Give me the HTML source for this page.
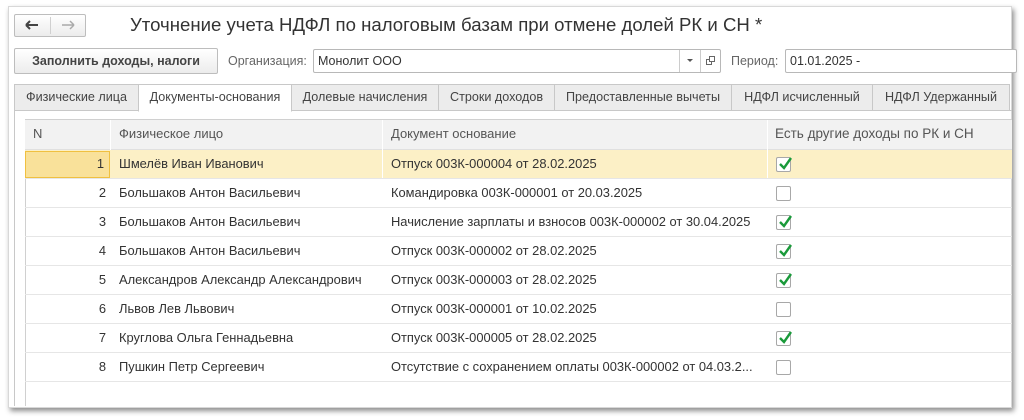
<!DOCTYPE html>
<html><head><meta charset="utf-8"><style>
*{box-sizing:border-box;margin:0;padding:0}
body{width:1024px;height:420px;background:#fff;font-family:"Liberation Sans","Noto Sans CJK SC",sans-serif;font-size:12px;color:#333;position:relative;overflow:hidden}
.win{position:absolute;left:8px;top:6px;width:1004px;height:402px;background:#fff;box-shadow:2px 3px 5px rgba(0,0,0,.45);border:1px solid #d8d8d8}
.abs{position:absolute}
.btn{position:absolute;border:1px solid #bdbdbd;border-radius:2px;background:linear-gradient(#fff,#ececec)}
.inp{position:absolute;border:1px solid #b8b8b8;background:#fff;border-radius:2px;height:24px;line-height:22px;padding-left:4px;color:#333;font-size:12.5px}
.lbl{position:absolute;color:#666;line-height:24px;font-size:12.5px}
.tab{position:absolute;top:84px;height:27px;border:1px solid #c8c8c8;background:#ececec;text-align:center;line-height:25px;color:#444;font-size:12.6px}
.tab.act{background:#fff;border-bottom-color:#fff;height:28px}
.row{position:absolute;left:25px;width:987px;height:29px;border-bottom:1px solid #e6e6e6;line-height:28px;font-size:12.9px}
.row span{position:absolute}
.n{left:0;width:81px;text-align:right}
.f{left:94px}.d{left:366px}
.cb{position:absolute;left:751px;top:7px;width:15px;height:15px;border:1px solid #a8a8a8;border-radius:2px;background:#fff}
.cb svg{position:absolute;left:0;top:-4px}
</style></head><body>
<div class="win"></div>
<div class="btn" style="left:14px;top:14px;width:72px;height:23px"></div>
<div class="abs" style="left:50px;top:17px;width:1px;height:17px;background:#d0d0d0"></div>
<svg class="abs" style="left:24px;top:19px" width="16" height="12"><path d="M2 6H14M2 6L6 2M2 6L6 10" stroke="#444" stroke-width="2" fill="none"/></svg>
<svg class="abs" style="left:60px;top:19px" width="16" height="12"><path d="M2 6H14M14 6L10 2M14 6L10 10" stroke="#aaa" stroke-width="1.5" fill="none"/></svg>
<div class="abs" style="left:130px;top:13px;font-size:18.6px;color:#333;line-height:24px">Уточнение учета НДФЛ по налоговым базам при отмене долей РК и СН *</div>
<div class="btn" style="left:14px;top:48px;width:204px;height:26px;text-align:center;line-height:24px;font-weight:bold;color:#444;font-size:12.5px">Заполнить доходы, налоги</div>
<div class="lbl" style="left:228px;top:49px">Организация:</div>
<div class="inp" style="left:313px;top:49px;width:408px">Монолит ООО</div>
<div class="abs" style="left:679px;top:50px;width:1px;height:22px;background:#ccc"></div>
<div class="abs" style="left:700px;top:50px;width:1px;height:22px;background:#ccc"></div>
<div class="abs" style="left:687px;top:59px;border-left:3px solid transparent;border-right:3px solid transparent;border-top:3px solid #555"></div>
<svg class="abs" style="left:705px;top:55px" width="11" height="11"><rect x="1.5" y="4.5" width="5" height="5" fill="none" stroke="#666"/><rect x="4.5" y="1.5" width="5" height="5" fill="#fff" stroke="#666"/></svg>
<div class="lbl" style="left:731px;top:49px">Период:</div>
<div class="inp" style="left:785px;top:49px;width:232px">01.01.2025 -</div>
<div class="abs" style="left:14px;top:110px;width:998px;height:296px;border-left:1px solid #c8c8c8;border-top:1px solid #c8c8c8"></div>
<div class="tab" style="left:14px;width:125px">Физические лица</div>
<div class="tab act" style="left:138px;width:154px">Документы-основания</div>
<div class="tab" style="left:291px;width:148px">Долевые начисления</div>
<div class="tab" style="left:438px;width:117px">Строки доходов</div>
<div class="tab" style="left:554px;width:178px">Предоставленные вычеты</div>
<div class="tab" style="left:731px;width:142px">НДФЛ исчисленный</div>
<div class="tab" style="left:872px;width:138px">НДФЛ Удержанный</div>
<div class="abs" style="left:25px;top:119px;width:987px;height:287px;border-left:1px solid #d0d0d0;border-top:1px solid #d0d0d0"></div>
<div class="abs" style="left:25px;top:120px;width:987px;height:30px;background:#f2f2f2;border-bottom:1px solid #e0e0e0;color:#555;line-height:28px;font-size:13px">
<span class="abs" style="left:8px">N</span>
<span class="abs" style="left:94px">Физическое лицо</span>
<span class="abs" style="left:366px">Документ основание</span>
<span class="abs" style="left:750px;font-size:13.5px">Есть другие доходы по РК и СН</span>
<div class="abs" style="left:85px;top:0;width:1px;height:30px;background:#fff"></div>
<div class="abs" style="left:357px;top:0;width:1px;height:30px;background:#fff"></div>
<div class="abs" style="left:742px;top:0;width:1px;height:30px;background:#fff"></div>
</div>
<div class="row" style="top:150px;background:#fcf0c6"><div class="abs" style="left:0;top:1px;width:85px;height:27px;background:#f9e19a;border:1px solid #f0c040"></div><span class="n" style="width:79px">1</span><span class="f">Шмелёв Иван Иванович</span><span class="d">Отпуск 003К-000004 от 28.02.2025</span><div class="abs" style="left:357px;top:0;width:1px;height:28px;background:#fff"></div><div class="abs" style="left:742px;top:0;width:1px;height:28px;background:#fff"></div><div class="cb"><svg width="16" height="18"><path d="M3 10L7 14L14 4" stroke="#1a9a3a" stroke-width="2.4" fill="none"/></svg></div></div>
<div class="row" style="top:179px"><span class="n">2</span><span class="f">Большаков Антон Васильевич</span><span class="d">Командировка 003К-000001 от 20.03.2025</span><div class="cb"></div></div>
<div class="row" style="top:208px"><span class="n">3</span><span class="f">Большаков Антон Васильевич</span><span class="d">Начисление зарплаты и взносов 003К-000002 от 30.04.2025</span><div class="cb"><svg width="16" height="18"><path d="M3 10L7 14L14 4" stroke="#1a9a3a" stroke-width="2.4" fill="none"/></svg></div></div>
<div class="row" style="top:237px"><span class="n">4</span><span class="f">Большаков Антон Васильевич</span><span class="d">Отпуск 003К-000002 от 28.02.2025</span><div class="cb"><svg width="16" height="18"><path d="M3 10L7 14L14 4" stroke="#1a9a3a" stroke-width="2.4" fill="none"/></svg></div></div>
<div class="row" style="top:266px"><span class="n">5</span><span class="f">Александров Александр Александрович</span><span class="d">Отпуск 003К-000003 от 28.02.2025</span><div class="cb"><svg width="16" height="18"><path d="M3 10L7 14L14 4" stroke="#1a9a3a" stroke-width="2.4" fill="none"/></svg></div></div>
<div class="row" style="top:295px"><span class="n">6</span><span class="f">Львов Лев Львович</span><span class="d">Отпуск 003К-000001 от 10.02.2025</span><div class="cb"></div></div>
<div class="row" style="top:324px"><span class="n">7</span><span class="f">Круглова Ольга Геннадьевна</span><span class="d">Отпуск 003К-000005 от 28.02.2025</span><div class="cb"><svg width="16" height="18"><path d="M3 10L7 14L14 4" stroke="#1a9a3a" stroke-width="2.4" fill="none"/></svg></div></div>
<div class="row" style="top:353px"><span class="n">8</span><span class="f">Пушкин Петр Сергеевич</span><span class="d">Отсутствие с сохранением оплаты 003К-000002 от 04.03.2...</span><div class="cb"></div></div>
</body></html>
